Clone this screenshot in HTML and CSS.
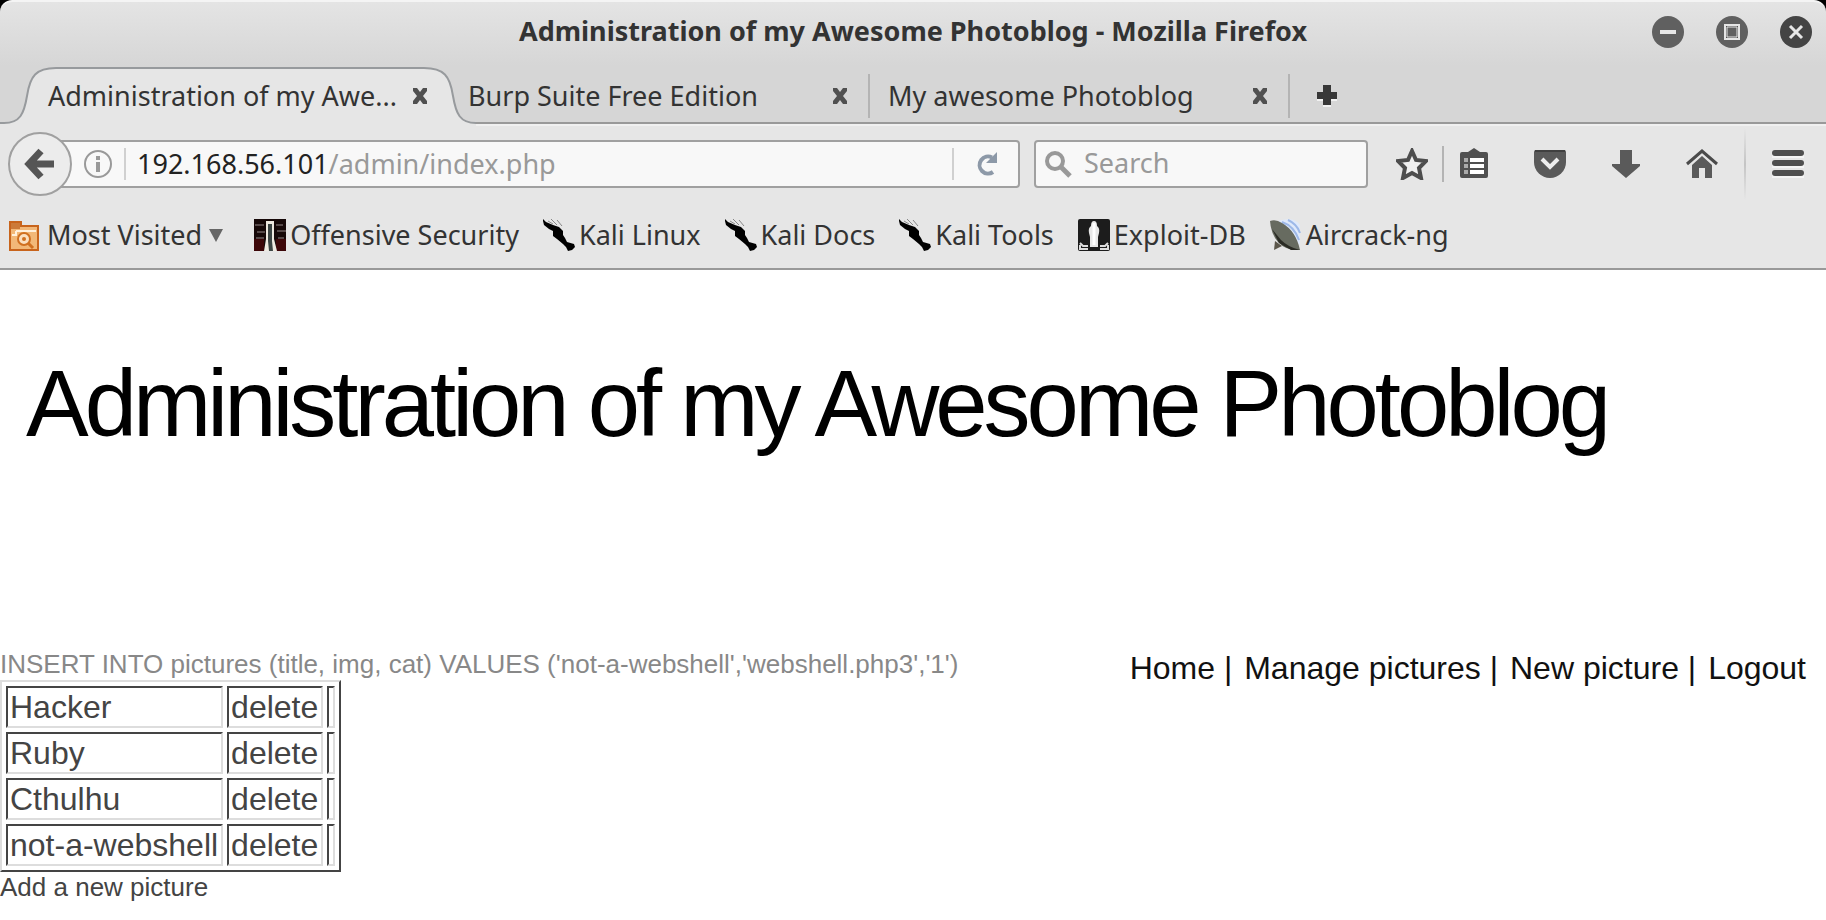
FILE: index.html
```html
<!DOCTYPE html>
<html lang="en">
<head>
<meta charset="utf-8">
<title>Administration of my Awesome Photoblog</title>
<link rel="stylesheet" href="styles.css">
</head>
<body>
<svg class="defs" width="0" height="0" aria-hidden="true">
  <symbol id="close" viewBox="0 0 16 16"><path d="M1 0h4l3 4 3-4h4v3l-4 5 4 5v3h-4l-3-4-3 4H1v-3l4-5-4-5z" fill="#505050"/></symbol>
  <symbol id="kali" viewBox="0 0 32 32"><path d="M0 0l3 3 7 3 6 2 4 4v4l2 3 2 4 7 2 1 3-3 3-4 1-2-4-3-3-6-5-4-3v-5l-4-2-5-4-1-4z" fill="#000"/><path d="M5 2l5 3M8 0l6 6M14 1l5 6" fill="none" stroke="#888" stroke-width="1"/></symbol>
</svg>
<header class="browser">
  <div class="titlebar">
    <div class="window-title">Administration of my Awesome Photoblog - Mozilla Firefox</div>
    <div class="window-buttons">
      <button type="button" aria-label="Minimize"><svg viewBox="0 0 32 32"><circle cx="16" cy="16" r="16" fill="#606060"/><path d="M8 16h16" stroke="#e6e6e6" stroke-width="4"/></svg></button>
      <button type="button" aria-label="Maximize"><svg viewBox="0 0 32 32"><circle cx="16" cy="16" r="16" fill="#606060"/><path d="M9 9h14v14H9z" fill="#4f4f4f" stroke="#e6e6e6" stroke-width="2"/><path d="M11 11h10v10H11z" fill="#606060" stroke="#e6e6e6" stroke-width="1"/></svg></button>
      <button type="button" aria-label="Close window"><svg viewBox="0 0 32 32"><circle cx="16" cy="16" r="16" fill="#444"/><path d="M10 10l12 12M22 10L10 22" stroke="#e6e6e6" stroke-width="3"/></svg></button>
    </div>
  </div>
  <div class="tabs">
    <div class="tab active">
      <svg class="tab-shape" viewBox="0 0 476 60" aria-hidden="true"><path d="M0 57H4C20 57 24 48 27 30C30 10 36 2 56 2H424C444 2 450 10 453 30C456 48 460 57 476 57V60H0z" fill="#e6e6e6"/><path d="M0 57H4C20 57 24 48 27 30C30 10 36 2 56 2H424C444 2 450 10 453 30C456 48 460 57 476 57" fill="none" stroke="#979a9d" stroke-width="2"/></svg>
      <span class="tab-label">Administration of my Awe...</span>
      <button type="button" aria-label="Close tab"><svg viewBox="0 0 16 16"><use href="#close"/></svg></button>
    </div>
    <div class="tab ruled">
      <span class="tab-label">Burp Suite Free Edition</span>
      <button type="button" aria-label="Close tab"><svg viewBox="0 0 16 16"><use href="#close"/></svg></button>
    </div>
    <div class="tab ruled">
      <span class="tab-label">My awesome Photoblog</span>
      <button type="button" aria-label="Close tab"><svg viewBox="0 0 16 16"><use href="#close"/></svg></button>
    </div>
    <button class="new-tab" type="button" aria-label="New tab"><svg viewBox="0 0 22 22"><path d="M7 2h8v6h6v8h-6v6H7v-6H1V8h6z" fill="#f2f2f2"/><path d="M7 0h8v7h6v7h-6v6H7v-6H1V7h6z" fill="#383838"/></svg></button>
  </div>
  <div class="toolbar">
    <button class="back" type="button" aria-label="Back"><svg viewBox="0 0 32 32"><path d="M17 3L5 16l12 13M6 16h24" fill="none" stroke="#555" stroke-width="7"/></svg></button>
    <div class="address">
      <svg class="info" viewBox="0 0 28 28" aria-hidden="true"><circle cx="14" cy="14" r="13" fill="none" stroke="#999" stroke-width="2"/><path d="M12 6h4v4h-4zM12 12h4v10h-4z" fill="#999"/></svg>
      <div class="url" role="textbox" aria-label="Address">192.168.56.101<span>/admin/index.php</span></div>
      <button class="reload" type="button" aria-label="Reload"><svg viewBox="0 0 24 24"><path d="M18 5.500A8.500 8.500 0 1 0 19 20" fill="none" stroke="#8d99a8" stroke-width="4"/><path d="M23 0v11H12z" fill="#8d99a8"/></svg></button>
    </div>
    <label class="search">
      <svg viewBox="0 0 28 28" aria-hidden="true"><circle cx="11" cy="11" r="8" fill="none" stroke="#999" stroke-width="4"/><path d="M16 16l10 10" stroke="#999" stroke-width="5"/></svg>
      <input type="text" placeholder="Search" aria-label="Search">
    </label>
    <div class="actions">
      <button type="button" aria-label="Bookmark this page"><svg viewBox="0 0 32 32"><path d="M16 3l4 9 10 1-7 7 2 10-9-5-9 5 2-10-7-7 10-1z" fill="#f0f0f0" stroke="#4d4d4d" stroke-width="4"/></svg></button>
      <i class="rule"></i>
      <button type="button" aria-label="Bookmarks"><svg viewBox="0 0 32 32"><path d="M2 6q0-2 2-2h6l6-4 6 4h6q2 0 2 2v22q0 2-2 2H4q-2 0-2-2z" fill="#505050"/><path d="M6 10h4v4H6zM6 16h4v4H6zM6 22h4v4H6z" fill="#aaa"/><path d="M12 10h14v4H12zM12 16h14v4H12zM12 22h14v4H12z" fill="#fff"/></svg></button>
      <button type="button" aria-label="Pocket"><svg viewBox="0 0 32 32"><path d="M2 2h28q2 0 2 2v10a16 16 0 0 1-32 0V4q0-2 2-2z" fill="#5a5a5a"/><path d="M1 3h30" stroke="#404040" stroke-width="2"/><path d="M8 11l8 8 8-8" fill="none" stroke="#eee" stroke-width="4"/></svg></button>
      <button type="button" aria-label="Downloads"><svg viewBox="0 0 32 32"><path d="M10 2h12v14h8v2L16 30 2 18v-2h8z" fill="#5a5a5a"/></svg></button>
      <button type="button" aria-label="Home"><svg viewBox="0 0 32 32"><path d="M6 17l10-9 10 9v13h-7V20h-6v10H6z" fill="#5a5a5a"/><path d="M1 16L16 3l15 13" fill="none" stroke="#4a4a4a" stroke-width="3"/></svg></button>
      <i class="rule tall"></i>
      <button type="button" aria-label="Menu"><svg viewBox="0 0 32 32"><path d="M0 8h32M0 18h32M0 28h32" stroke="#f4f4f4" stroke-width="4"/><path d="M3 5h26M3 15h26M3 25h26" stroke="#4f4f4f" stroke-width="6" stroke-linecap="round"/></svg></button>
    </div>
  </div>
  <nav class="bookmarks" aria-label="Bookmarks toolbar">
    <a href="#" class="folder"><svg viewBox="0 0 32 32"><path d="M2 3h11v4h17v24H2z" fill="#f2b878" stroke="#c8641c" stroke-width="2"/><path d="M3 4h9v6H3z" fill="#cc7a38"/><path d="M8 12h20M8 12v4H4" fill="none" stroke="#fff0dc" stroke-width="2"/><circle cx="16" cy="20" r="6" fill="#fbe0c0" stroke="#d07020" stroke-width="2"/><circle cx="16" cy="20" r="2" fill="#d07020"/><path d="M20 24l5 5" stroke="#d07020" stroke-width="3"/></svg><span>Most Visited</span><svg class="arrow" viewBox="0 0 14 14"><path d="M0 1h14L7 14z" fill="#666"/></svg></a>
    <a href="#"><svg viewBox="0 0 32 32"><path d="M0 0h32v32H0z" fill="#160808"/><path d="M0 20h10v12H0zM22 20h10v12H22z" fill="#3c0608"/><path d="M1 6h9M3 13h8M22 6h7M23 12h9M2 19h8M24 19h6" stroke="#554848" stroke-width="2"/><path d="M12 2h8v18l3 12H10l2-12z" fill="#eee9e0"/><path d="M14 5h4v17l1 10h-4l-1-10z" fill="#3c4544"/></svg><span>Offensive Security</span></a>
    <a href="#"><svg viewBox="0 0 32 32"><use href="#kali"/></svg><span>Kali Linux</span></a>
    <a href="#"><svg viewBox="0 0 32 32"><use href="#kali"/></svg><span>Kali Docs</span></a>
    <a href="#"><svg viewBox="0 0 32 32"><use href="#kali"/></svg><span>Kali Tools</span></a>
    <a href="#"><svg viewBox="0 0 32 32"><rect width="32" height="32" rx="2" fill="#1c1c1c"/><path d="M16 2q3 0 3 5 3 2 2 7l-1 4v10h-8V18l-1-4q-1-5 2-7 0-5 3-5z" fill="#e8e8e8"/><path d="M16 4v22" stroke="#fff" stroke-width="3"/><path d="M2 24l3 3h5M2 26v4h8M30 24l-3 3h-5M30 26v4h-8" fill="none" stroke="#ddd" stroke-width="2"/></svg><span>Exploit-DB</span></a>
    <a href="#"><svg viewBox="0 0 32 32"><path d="M8 2q16-5 22 4v20z" fill="#dfe9fa"/><path d="M12 3q12 4 17 18M18 1q9 4 12 13" fill="none" stroke="#9db8e8" stroke-width="2"/><path d="M5 22l-1 9 8-4z" fill="#5b564a"/><path d="M0 2q6-2 12 2 14 8 18 27-14 1-22-8Q1 15 0 2z" fill="#676b60"/><path d="M2 10l7 14 12 7h9q-12-3-19-10z" fill="#2b2c25"/></svg><span>Aircrack-ng</span></a>
  </nav>
</header>
<main class="page">
  <h1>Administration of my Awesome Photoblog</h1>
  <div class="content">
    <section class="pictures">
      <p class="query">INSERT INTO pictures (title, img, cat) VALUES ('not-a-webshell','webshell.php3','1')</p>
      <table>
        <tr><td>Hacker</td><td><a href="#">delete</a></td><td></td></tr>
        <tr><td>Ruby</td><td><a href="#">delete</a></td><td></td></tr>
        <tr><td>Cthulhu</td><td><a href="#">delete</a></td><td></td></tr>
        <tr><td>not-a-webshell</td><td><a href="#">delete</a></td><td></td></tr>
      </table>
      <a class="add" href="#">Add a new picture</a>
    </section>
    <nav class="site-nav" aria-label="Site"><a href="#">Home |</a><a href="#">Manage pictures |</a><a href="#">New picture |</a><a href="#">Logout</a></nav>
  </div>
</main>
</body>
</html>
```
FILE: styles.css
```css
* { box-sizing: border-box; }
body { margin: 0; background: #fff; color: #444; font-family: "Liberation Sans", Arial, sans-serif; }
button { flex: none; margin: 0; padding: 0; border: 0; background: none; font: inherit; }
a { color: inherit; text-decoration: none; }
svg { display: block; flex: none; }
.defs { position: absolute; }

.browser { font: 27px/40px "Noto Sans", "Open Sans", sans-serif; color: #333; background: #000; }

.titlebar { display: grid; grid-template-columns: 1fr auto 1fr; align-items: center; height: 66px; padding: 0 14px 4px; border-top: 2px solid #f4f4f4; border-radius: 12px 12px 0 0; background: linear-gradient(#e4e4e4, #d6d6d6); }
.window-title { grid-column: 2; font-weight: 700; line-height: 36px; padding-bottom: 2px; }
.window-buttons { display: flex; justify-content: flex-end; gap: 32px; }
.window-buttons svg { width: 32px; height: 32px; }

.tabs { display: flex; align-items: stretch; height: 60px; background: linear-gradient(#d6d6d6 56px, #999 56px, #999 58px, #f0f0f0 58px); }
.tab { position: relative; display: flex; align-items: center; justify-content: space-between; width: 422px; padding: 0 22px 0 20px; }
.tab.active { width: 448px; padding-left: 48px; padding-right: 20px; }
.tab.ruled + .ruled { width: 420px; padding-left: 18px; }
.tab.ruled::after, .rule { background: #b4b4b4; width: 2px; }
.tab.ruled::after { content: ""; position: absolute; right: 0; top: 8px; height: 44px; }
.tab-shape { position: absolute; left: 0; top: 0; width: 476px; height: 60px; }
.tab-label { position: relative; white-space: nowrap; }
.tab button { position: relative; }
.tab button svg { width: 16px; height: 16px; }
.new-tab { margin-left: 26px; }
.new-tab svg { width: 22px; height: 22px; }

.toolbar { display: flex; align-items: center; height: 76px; padding: 0 22px 0 8px; background: #e6e6e6; }
.back { position: relative; z-index: 1; display: grid; place-items: center; width: 64px; height: 64px; border: 2px solid #a0a0a0; border-radius: 50%; background: #ececec; }
.back svg { width: 32px; height: 32px; }
.address, .search { display: flex; align-items: center; height: 48px; border: 2px solid #a0a0a0; border-radius: 4px; background: #f8f8f8; }
.address { flex: 1; min-width: 0; margin-left: -16px; padding-left: 26px; }
.info { width: 28px; height: 28px; margin-right: 12px; }
.url { flex: 1; min-width: 0; padding-left: 11px; line-height: 32px; border-left: 2px solid #d0d0d0; white-space: nowrap; color: #222; }
.url span { color: #999; }
.reload { padding: 4px 20px; border-left: 2px solid #d0d0d0; }
.reload svg { width: 24px; height: 24px; }
.search { width: 334px; margin-left: 14px; padding-left: 8px; }
.search svg { width: 28px; height: 28px; }
.search input { flex: 1; min-width: 0; padding: 0 12px 2px; border: 0; background: none; font: inherit; line-height: 36px; }
.search input::placeholder { color: #999; opacity: 1; }
.actions { display: flex; align-items: center; gap: 14px; margin-left: 28px; }
.actions svg { width: 32px; height: 32px; }
.actions button + button { margin-left: 30px; }
.rule { height: 36px; }
.rule.tall { height: 72px; margin: 0 12px; background: linear-gradient(#e6e6e6, #c4c4c4, #e6e6e6); }

.bookmarks { display: flex; align-items: center; gap: 24px; height: 68px; padding: 0 8px; background: #e6e6e6; border-bottom: 2px solid #999; }
.bookmarks a { display: flex; align-items: center; gap: 4px; white-space: nowrap; }
.bookmarks svg { width: 32px; height: 32px; }
.bookmarks .folder { gap: 7px; margin-right: 7px; }
.bookmarks svg.arrow { width: 14px; height: 14px; }

h1 { margin: 0; padding: 80px 0 0 26px; color: #000; font-size: 94px; line-height: 108px; font-weight: 400; letter-spacing: -4px; }
.content { display: flex; justify-content: space-between; align-items: flex-start; padding-top: 192px; }
.query { margin: 0; font-size: 26px; line-height: 28px; padding-bottom: 2px; color: #888; }
table { border: 2px solid; border-color: #ddd #444 #444 #ddd; border-spacing: 4px; font-size: 32px; line-height: 34px; }
td { padding: 2px; border: 2px solid; border-color: #444 #ddd #ddd #444; }
td:first-child, td:nth-child(2) { padding-right: 3px; }
.add { display: block; font-size: 26px; line-height: 30px; }
.site-nav { display: flex; gap: 12px; padding: 0 20px 0 0; font-size: 32px; line-height: 36px; color: #111; white-space: nowrap; }
```
